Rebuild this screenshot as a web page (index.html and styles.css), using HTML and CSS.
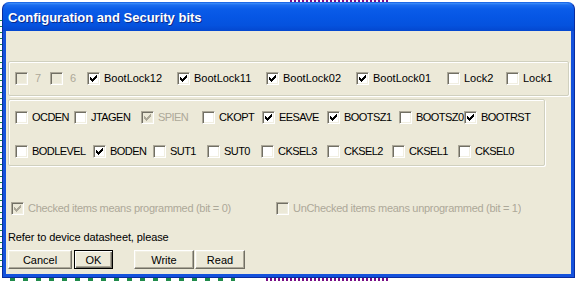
FILE: index.html
```html
<!DOCTYPE html>
<html>
<head>
<meta charset="utf-8">
<title>Configuration and Security bits</title>
<link rel="stylesheet" href="styles.css">
</head>
<body>
<svg class="defs" width="0" height="0" aria-hidden="true">
  <defs>
    <path id="tick" d="M6 0h1v1h-1zM5 1h2v1h-2zM0 2h1v1h-1zM4 2h3v1h-3zM0 3h2v1h-2zM3 3h3v1h-3zM0 4h5v1h-5zM1 5h3v1h-3zM2 6h1v1h-1z"/>
  </defs>
</svg>
<div class="window">
  <div class="titlebar"><span class="title">Configuration and Security bits</span></div>
  <div class="client">
    <div class="group lock-group">
      <div class="row row-lock">
        <label class="item num disabled"><span class="cb"></span>7</label>
        <label class="item num disabled"><span class="cb"></span>6</label>
        <label class="item"><span class="cb"><svg viewBox="0 0 7 7"><use href="#tick"/></svg></span>BootLock12</label>
        <label class="item"><span class="cb"><svg viewBox="0 0 7 7"><use href="#tick"/></svg></span>BootLock11</label>
        <label class="item"><span class="cb"><svg viewBox="0 0 7 7"><use href="#tick"/></svg></span>BootLock02</label>
        <label class="item"><span class="cb"><svg viewBox="0 0 7 7"><use href="#tick"/></svg></span>BootLock01</label>
        <label class="item"><span class="cb"></span>Lock2</label>
        <label class="item"><span class="cb"></span>Lock1</label>
      </div>
    </div>
    <div class="group fuse-group">
      <div class="row row-fuse-high caps">
        <label class="item"><span class="cb"></span>OCDEN</label>
        <label class="item"><span class="cb"></span>JTAGEN</label>
        <label class="item disabled"><span class="cb"><svg viewBox="0 0 7 7"><use href="#tick"/></svg></span>SPIEN</label>
        <label class="item"><span class="cb"></span>CKOPT</label>
        <label class="item"><span class="cb"><svg viewBox="0 0 7 7"><use href="#tick"/></svg></span>EESAVE</label>
        <label class="item"><span class="cb"><svg viewBox="0 0 7 7"><use href="#tick"/></svg></span>BOOTSZ1</label>
        <label class="item"><span class="cb"></span>BOOTSZ0</label>
        <label class="item"><span class="cb"><svg viewBox="0 0 7 7"><use href="#tick"/></svg></span>BOOTRST</label>
      </div>
      <div class="row row-fuse-low caps">
        <label class="item"><span class="cb"></span>BODLEVEL</label>
        <label class="item"><span class="cb"><svg viewBox="0 0 7 7"><use href="#tick"/></svg></span>BODEN</label>
        <label class="item"><span class="cb"></span>SUT1</label>
        <label class="item"><span class="cb"></span>SUT0</label>
        <label class="item"><span class="cb"></span>CKSEL3</label>
        <label class="item"><span class="cb"></span>CKSEL2</label>
        <label class="item"><span class="cb"></span>CKSEL1</label>
        <label class="item"><span class="cb"></span>CKSEL0</label>
      </div>
    </div>
    <div class="row row-legend">
      <label class="item disabled"><span class="cb"><svg viewBox="0 0 7 7"><use href="#tick"/></svg></span>Checked items means programmed (bit = 0)</label>
      <label class="item disabled"><span class="cb"></span>UnChecked items means unprogrammed (bit = 1)</label>
    </div>
    <div class="note">Refer to device datasheet, please</div>
    <div class="buttons">
      <button class="btn btn-cancel">Cancel</button>
      <button class="btn btn-ok">OK</button>
      <button class="btn btn-write">Write</button>
      <button class="btn btn-read">Read</button>
    </div>
  </div>
</div>
</body>
</html>
```

FILE: styles.css
```css
html, body {
  margin: 0;
  padding: 0;
}

body {
  width: 577px;
  height: 281px;
  overflow: hidden;
  font-family: "Liberation Sans", Arial, sans-serif;
  font-size: 11px;
  color: #000;
  background-color: #fff;
  background-image:
    repeating-linear-gradient(90deg, #7a0f86 0 2px, transparent 2px 4px),
    repeating-linear-gradient(90deg, #7a0f86 0 2px, transparent 2px 4px),
    repeating-linear-gradient(90deg, #1f8a4a 0 5px, transparent 5px 13px),
    repeating-linear-gradient(180deg, #1f8a4a 0 1px, transparent 1px 6px);
  background-repeat: no-repeat;
  background-position: 290px 0, 266px 278px, 10px 278px, 0 20px;
  background-size: 100px 2px, 124px 3px, 225px 3px, 2px 250px;
}

.defs {
  position: absolute;
}

.window {
  margin: 2px 0 0 2px;
  width: 573px;
  height: 276px;
  display: flex;
  flex-direction: column;
  box-sizing: border-box;
  border-radius: 7px 7px 0 0;
  background: #1452dc;
  border: 1px solid #0a2c9e;
  border-top-color: #1d6ae8;
}

.titlebar {
  height: 28px;
  flex: none;
  display: flex;
  align-items: center;
  padding-left: 5px;
  border-radius: 7px 7px 0 0;
  background: linear-gradient(180deg, #3f90fa 0, #1a6cef 2px, #0a5ce8 6px, #0656e4 50%, #0552de 80%, #0447cf 100%);
}

.title {
  font-family: "Liberation Sans", Arial, sans-serif;
  font-weight: bold;
  font-size: 13px;
  color: #fff;
  text-shadow: 1px 1px 0 #0b2a8a;
  padding-top: 1px;
}

.client {
  flex: 1;
  margin: 0 3px 3px 3px;
  background: #ece9d8;
  display: flex;
  flex-direction: column;
  align-items: flex-start;
}

.group {
  box-sizing: border-box;
  margin-left: 2px;
  border: 1px solid #d0d0bf;
  box-shadow: 1px 1px 0 #fff, inset 1px 1px 0 #fff;
  border-radius: 2px;
}

.lock-group {
  margin-top: 30px;
  width: 561px;
  height: 35px;
  padding: 10px 6px;
}

.fuse-group {
  margin-top: 3px;
  width: 537px;
  height: 67px;
  padding: 11px 6px 7px;
  display: flex;
  flex-direction: column;
  gap: 21px;
}

.row {
  display: grid;
  height: 13px;
  align-items: center;
}

.row-lock {
  grid-template-columns: 35px 37px 90px 89px 90px 91px 59px auto;
}

.row-fuse-high {
  grid-template-columns: 59px 67px 61px 60px 65px 72px 65px auto;
}

.row-fuse-low {
  grid-template-columns: 78px 60px 54px 54px 66px 65px 66px auto;
}

.caps .item {
  letter-spacing: -0.55px;
}

.row-legend {
  margin: 36px 0 0 5px;
  grid-template-columns: 265px auto;
}

.row-legend .item {
  letter-spacing: -0.3px;
}

.item {
  display: flex;
  align-items: center;
  gap: 4px;
  min-width: 0;
  overflow: hidden;
  white-space: nowrap;
  line-height: 13px;
}

.item.num {
  gap: 7px;
}

.cb {
  flex: none;
  width: 13px;
  height: 13px;
  box-sizing: border-box;
  background: #fff;
  border: 1px solid;
  border-color: #aca899 #fff #fff #aca899;
  box-shadow: inset 1px 1px 0 #716f64, inset -1px -1px 0 #f1efe2;
  position: relative;
}

.cb svg {
  position: absolute;
  left: 2px;
  top: 2px;
  width: 7px;
  height: 7px;
  fill: #000;
  shape-rendering: crispEdges;
}

.disabled {
  color: #aca899;
}

.disabled .cb {
  background: #ece9d8;
}

.disabled .cb svg {
  fill: #aca899;
}

.note {
  margin: 16px 0 0 2px;
  line-height: 13px;
  letter-spacing: -0.1px;
}

.buttons {
  margin: 6px 0 0 2px;
  display: flex;
  height: 19px;
}

.btn {
  box-sizing: border-box;
  height: 19px;
  padding: 0;
  margin: 0;
  font-family: "Liberation Sans", Arial, sans-serif;
  font-size: 11px;
  color: #000;
  background: #ece9d8;
  border: 1px solid;
  border-color: #fff #716f64 #716f64 #fff;
  box-shadow: inset -1px -1px 0 #aca899, inset 1px 1px 0 #f1efe2;
  border-radius: 0;
}

.btn-cancel {
  width: 64px;
}

.btn-ok {
  width: 39px;
  margin-left: 2px;
  border: 1px solid #000;
  box-shadow: inset 1px 1px 0 #fff, inset -1px -1px 0 #716f64, inset -2px -2px 0 #aca899;
}

.btn-write {
  width: 60px;
  margin-left: 21px;
}

.btn-read {
  width: 50px;
  margin-left: 1px;
}
```
